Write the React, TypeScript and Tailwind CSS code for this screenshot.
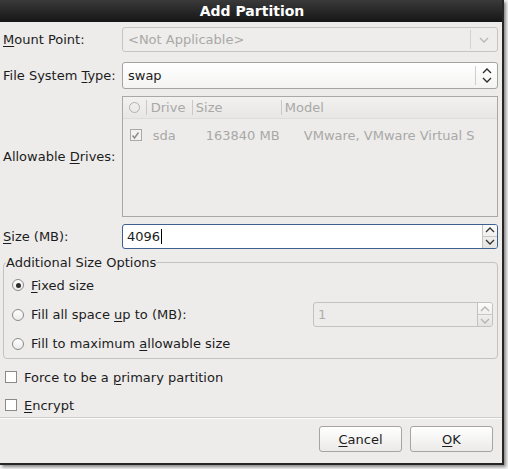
import React from "react";

function U({ children }: { children: React.ReactNode }) {
  return <span className="underline decoration-1 underline-offset-2">{children}</span>;
}

function ChevronDown({ className = "" }: { className?: string }) {
  return (
    <svg width="10" height="6" viewBox="0 0 10 6" className={className}>
      <path d="M1 1 L5 5 L9 1" fill="none" stroke="currentColor" strokeWidth="1.3" />
    </svg>
  );
}

function ChevronUp({ className = "" }: { className?: string }) {
  return (
    <svg width="10" height="6" viewBox="0 0 10 6" className={className}>
      <path d="M1 5 L5 1 L9 5" fill="none" stroke="currentColor" strokeWidth="1.3" />
    </svg>
  );
}

function Radio({ checked }: { checked?: boolean }) {
  return (
    <span className="w-[12px] h-[12px] rounded-full border border-[#8b8a88] bg-gradient-to-b from-[#ffffff] to-[#ecebea] flex items-center justify-center shrink-0">
      {checked && <span className="w-[5px] h-[5px] rounded-full bg-[#2e2e2e]" />}
    </span>
  );
}

function Check({ disabled, checked }: { disabled?: boolean; checked?: boolean }) {
  return (
    <span
      className={
        disabled
          ? "w-[12px] h-[12px] border border-[#a9a8a6] bg-[#f3f2f1] flex items-center justify-center shrink-0"
          : "w-[12px] h-[12px] border border-[#8b8a88] bg-white flex items-center justify-center shrink-0"
      }
    >
      {checked && (
        <svg width="9" height="9" viewBox="0 0 9 9">
          <path d="M1.5 4.5 L3.5 7 L7.5 1.5" fill="none" stroke={disabled ? "#8e8d8b" : "#222"} strokeWidth="1.5" />
        </svg>
      )}
    </span>
  );
}

function SpinButtons({ disabled }: { disabled?: boolean }) {
  const c = disabled ? "text-[#b4b3b1]" : "text-[#333333]";
  return (
    <div className="w-[15px] flex flex-col border-l border-[#c2c1bf] bg-gradient-to-b from-[#fbfbfa] to-[#e4e3e1]">
      <div className={`flex-1 flex items-center justify-center border-b border-[#c8c7c5] ${c}`}>
        <ChevronUp />
      </div>
      <div className={`flex-1 flex items-center justify-center ${c}`}>
        <ChevronDown />
      </div>
    </div>
  );
}

export default function App() {
  return (
    <div className="w-[508px] h-[469px] bg-[#f4f4f4] font-['DejaVu_Sans',sans-serif] text-[13px] leading-[15px] text-[#1c1c1c] overflow-hidden">
      <div className="w-[504px] h-[465px] border-r-2 border-b-2 border-[#262626] bg-[#edeceb] shadow-[2px_2px_3px_rgba(0,0,0,0.45)] flex flex-col">
        {/* title bar */}
        <div className="h-[22px] shrink-0 bg-gradient-to-b from-[#3a3a3a] to-[#161616] flex items-center justify-center">
          <span className="text-white font-bold text-[14px] leading-[16px] pl-[2px]">Add Partition</span>
        </div>

        <div className="flex flex-col pl-[3px] pr-[4px]">
          {/* Mount point */}
          <div className="flex items-center mt-[5px] h-[25px]">
            <div className="w-[119px]">
              <U>M</U>ount Point:
            </div>
            <div className="w-[376px] h-[25px] rounded-[3px] border border-[#c6c5c3] bg-[#eeedec] flex items-center">
              <span className="flex-1 pl-[5px] text-[#a9a8a6]">&lt;Not Applicable&gt;</span>
              <span className="w-px h-[19px] bg-[#d3d2d0]" />
              <span className="w-[26px] flex items-center justify-center text-[#b7b6b4]">
                <ChevronDown />
              </span>
            </div>
          </div>

          {/* File system type */}
          <div className="flex items-center mt-[10px] h-[27px]">
            <div className="w-[119px]">
              File System <U>T</U>ype:
            </div>
            <div className="w-[376px] h-[27px] rounded-[3px] border border-[#a4a3a1] bg-gradient-to-b from-[#ffffff] to-[#f4f4f3] flex items-center">
              <span className="flex-1 pl-[5px]">swap</span>
              <span className="w-px h-[19px] bg-[#cfcecc]" />
              <span className="w-[21px] flex flex-col items-center justify-center gap-[3px] text-[#2a2a2a]">
                <ChevronUp />
                <ChevronDown />
              </span>
            </div>
          </div>

          {/* Allowable drives */}
          <div className="flex items-center mt-[7px] h-[121px]">
            <div className="w-[119px]">
              Allowable <U>D</U>rives:
            </div>
            <div className="w-[377px] h-[121px] border border-[#a9a8a6] bg-[#edeceb] flex flex-col">
              <div className="h-[22px] flex items-center text-[#a9a8a6] bg-gradient-to-b from-[#f2f1f0] to-[#e8e7e6] border-b border-[#dddcda]">
                <div className="w-[23px] flex justify-center">
                  <span className="w-[11px] h-[11px] rounded-full border border-[#b3b2b0]" />
                </div>
                <span className="w-px h-[15px] bg-[#c9c8c6]" />
                <div className="w-[45px] pl-[4px]">Drive</div>
                <span className="w-px h-[15px] bg-[#c9c8c6]" />
                <div className="w-[88px] pl-[3px]">Size</div>
                <span className="w-px h-[15px] bg-[#c9c8c6]" />
                <div className="flex-1 pl-[3px]">Model</div>
              </div>
              <div className="h-[32px] flex items-center text-[#a9a8a6]">
                <div className="w-[7px]" />
                <Check disabled checked />
                <div className="w-[11px]" />
                <div className="w-[53px]">sda</div>
                <div className="w-[98px]">163840 MB</div>
                <div className="flex-1 whitespace-nowrap overflow-hidden">VMware, VMware Virtual S</div>
              </div>
            </div>
          </div>

          {/* Size */}
          <div className="flex items-center mt-[7px] h-[24px]">
            <div className="w-[119px]">
              <U>S</U>ize (MB):
            </div>
            <div className="w-[376px] h-[25px] rounded-[3px] border border-[#3f5f8f] bg-white flex overflow-hidden">
              <span className="flex-1 pl-[4px] flex items-center">
                4096<span className="w-px h-[15px] bg-black ml-[1px]" />
              </span>
              <SpinButtons />
            </div>
          </div>

          {/* Additional size options */}
          <fieldset className="mt-[7px] w-[495px] border border-[#c3c2c0] rounded-[4px] pl-[7px] pr-[4px] pb-0">
            <legend className="ml-[-5px] px-0 leading-[15px]">Additional Size Options</legend>
            <div className="flex items-center h-[30px] gap-[7px] pl-[1px]">
              <Radio checked />
              <span>
                <U>F</U>ixed size
              </span>
            </div>
            <div className="flex items-center h-[29px] gap-[7px] pl-[1px]">
              <Radio />
              <span className="flex-1">
                Fill all space <U>u</U>p to (MB):
              </span>
              <div className="w-[180px] h-[25px] rounded-[3px] border border-[#c3c2c0] bg-[#edeceb] flex overflow-hidden">
                <span className="flex-1 pl-[4px] flex items-center text-[#aeadab]">1</span>
                <SpinButtons disabled />
              </div>
            </div>
            <div className="flex items-center h-[29px] gap-[7px] pl-[1px]">
              <Radio />
              <span>
                Fill to maximum <U>a</U>llowable size
              </span>
            </div>
          </fieldset>

          {/* checkboxes */}
          <div className="flex items-center h-[22px] mt-[7px] gap-[7px] pl-[2px]">
            <Check />
            <span>
              Force to be a <U>p</U>rimary partition
            </span>
          </div>
          <div className="flex items-center h-[22px] mt-[6px] gap-[7px] pl-[2px]">
            <Check />
            <span>
              <U>E</U>ncrypt
            </span>
          </div>
        </div>

        {/* separator */}
        <div className="h-px bg-[#d0cfcd] mt-[1px]" />
        <div className="h-px bg-[#fafafa]" />

        {/* buttons */}
        <div className="flex justify-end gap-[8px] pr-[9px] mt-[7px]">
          <button className="w-[83px] h-[26px] rounded-[3px] border border-[#a5a4a2] bg-gradient-to-b from-[#ffffff] to-[#ebeae9] text-[#1c1c1c]">
            <U>C</U>ancel
          </button>
          <button className="w-[83px] h-[26px] rounded-[3px] border border-[#a5a4a2] bg-gradient-to-b from-[#ffffff] to-[#ebeae9] text-[#1c1c1c]">
            <U>O</U>K
          </button>
        </div>
      </div>
    </div>
  );
}
